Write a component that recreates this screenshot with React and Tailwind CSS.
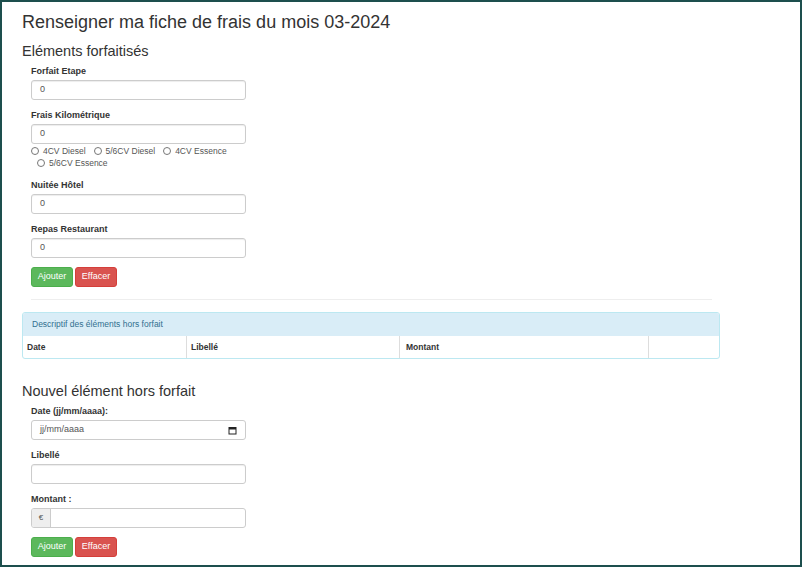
import React from 'react'

function Label({ children }) {
  return <div className="text-[9px] font-bold text-[#333] leading-[12px] mb-[3px]">{children}</div>
}

function Field({ value = '' }) {
  return (
    <div className="w-[215px] h-[20px] border border-[#ccc] rounded-[3px] bg-white flex items-center px-[8px] text-[9px] text-[#555] shadow-[inset_0_1px_1px_rgba(0,0,0,0.075)]">
      {value}
    </div>
  )
}

function Radio({ label }) {
  return (
    <span className="inline-flex items-center gap-[4px] mr-[8px]">
      <span className="w-[8px] h-[8px] rounded-full border border-[#777] bg-white" />
      <span>{label}</span>
    </span>
  )
}

function Buttons() {
  return (
    <div className="flex gap-[2px]">
      <button className="w-[42px] h-[20px] rounded-[3px] bg-[#5cb85c] border border-[#4cae4c] text-white text-[9px]">Ajouter</button>
      <button className="w-[42px] h-[20px] rounded-[3px] bg-[#d9534f] border border-[#d43f3a] text-white text-[9px]">Effacer</button>
    </div>
  )
}

export default function App() {
  return (
    <div className="w-[802px] h-[567px] border-2 border-[#1d4f4d] bg-white overflow-hidden font-['Liberation_Sans',Arial,sans-serif] text-[#333]">
      <div className="pl-[20px] pt-[9px]">
        <h1 className="text-[18px] leading-[22px] text-[#333]">Renseigner ma fiche de frais du mois 03-2024</h1>
        <h2 className="text-[14.5px] leading-[18px] mt-[9px] text-[#333]">Eléments forfaitisés</h2>

        <div className="pl-[9px] mt-[5px]">
          <Label>Forfait Etape</Label>
          <Field value="0" />

          <div className="mt-[9px]"><Label>Frais Kilométrique</Label></div>
          <Field value="0" />
          <div className="w-[215px] text-[8.5px] text-[#555] mt-[1px]">
            <div className="h-[12px] flex items-center">
              <Radio label="4CV Diesel" />
              <Radio label="5/6CV Diesel" />
              <Radio label="4CV Essence" />
            </div>
            <div className="h-[12px] flex items-center pl-[6px]"><Radio label="5/6CV Essence" /></div>
          </div>

          <div className="mt-[10px]"><Label>Nuitée Hôtel</Label></div>
          <Field value="0" />

          <div className="mt-[9px]"><Label>Repas Restaurant</Label></div>
          <Field value="0" />

          <div className="mt-[9px]"><Buttons /></div>
          <div className="w-[681px] border-t border-[#eee] mt-[12px]" />
        </div>

        <div className="w-[698px] mt-[12px] border border-[#bce8f1] rounded-[3px] overflow-hidden">
          <div className="h-[23px] bg-[#d9edf7] text-[#31708f] text-[8.5px] flex items-center pl-[9px]">
            Descriptif des éléments hors forfait
          </div>
          <div className="flex h-[22px] text-[8.5px] font-bold text-[#333] items-center">
            <div className="w-[164px] pl-[4px] h-full flex items-center border-r border-[#ddd]">Date</div>
            <div className="w-[213px] pl-[4px] h-full flex items-center border-r border-[#ddd]">Libellé</div>
            <div className="w-[249px] pl-[6px] h-full flex items-center border-r border-[#ddd]">Montant</div>
            <div className="flex-1" />
          </div>
        </div>

        <h2 className="text-[14.5px] leading-[18px] mt-[23px] text-[#333]">Nouvel élément hors forfait</h2>
        <div className="pl-[9px] mt-[5px]">
          <Label>Date (jj/mm/aaaa):</Label>
          <div className="w-[215px] h-[20px] border border-[#ccc] rounded-[3px] bg-white flex items-center justify-between px-[8px] text-[9px] text-[#555]">
            <span>jj/mm/aaaa</span>
            <svg width="9" height="9" viewBox="0 0 9 9">
              <rect x="1" y="1.5" width="7" height="6.5" fill="none" stroke="#222" strokeWidth="1" />
              <rect x="1" y="1.5" width="7" height="2" fill="#222" />
            </svg>
          </div>

          <div className="mt-[9px]"><Label>Libellé</Label></div>
          <Field />

          <div className="mt-[9px]"><Label>Montant :</Label></div>
          <div className="w-[215px] h-[20px] border border-[#ccc] rounded-[3px] bg-white flex overflow-hidden">
            <div className="w-[19px] h-full bg-[#eee] border-r border-[#ccc] flex items-center justify-center text-[8px] text-[#555]">€</div>
          </div>

          <div className="mt-[9px]"><Buttons /></div>
        </div>
      </div>
    </div>
  )
}
